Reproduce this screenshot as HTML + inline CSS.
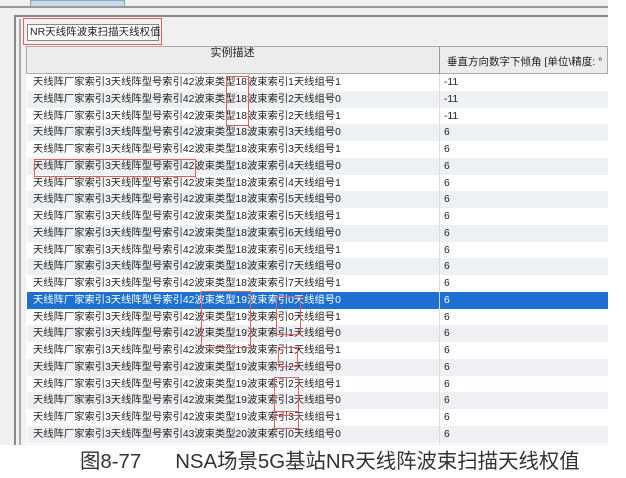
<!DOCTYPE html>
<html><head><meta charset="utf-8"><style>
*{margin:0;padding:0;box-sizing:border-box}
body{width:626px;height:478px;background:#fff;position:relative;overflow:hidden;font-family:"Liberation Sans","Noto Sans CJK SC",sans-serif}
.a{position:absolute}
.row{position:absolute;left:27px;width:581px;height:16.75px;font-size:10.3px;line-height:17.5px;color:#222;white-space:nowrap}
.row span{position:absolute}
.c1{left:6px}.c2{left:417px}
.rb{position:absolute;border:1.5px solid #e06060}
</style></head><body>
<div class="a" style="left:0;top:0;width:608px;height:445px;background:#f0f0f0"></div>
<div class="a" style="left:30px;top:0;width:95px;height:7px;background:#c9d9ee;border:1px solid #8aa"></div>
<div class="a" style="left:0;top:6px;width:608px;height:2px;background:#999"></div>
<div class="a" style="left:14px;top:15px;width:594px;height:2px;background:#888"></div>
<div class="a" style="left:14px;top:15px;width:2px;height:430px;background:#888"></div>
<div class="a" style="left:19px;top:19px;width:2px;height:426px;background:#aaa"></div>
<div class="a" style="left:27px;top:24px;width:132px;height:17px;background:#fff;border:1px solid #888;font-size:10.5px;line-height:15px;padding-left:2px;color:#222;white-space:nowrap">NR天线阵波束扫描天线权值</div>
<div class="rb" style="left:23px;top:18px;width:139px;height:27px"></div>
<div class="a" style="left:26px;top:46px;width:582px;height:28px;background:#ececec;border:1px solid #aaa"></div>
<div class="a" style="left:439px;top:46px;width:1px;height:28px;background:#999"></div>
<div class="a" style="left:26px;top:45px;width:413px;text-align:center;font-size:11px;line-height:16px;color:#222">实例描述</div>
<div class="a" style="left:447px;top:54px;font-size:10.5px;color:#222;white-space:nowrap;width:161px;overflow:hidden">垂直方向数字下倾角 [单位\精度: °</div>
<div class="a" style="left:26px;top:74px;width:582px;height:370px;background:#fff"></div>
<div id="rows"></div>
<script>
var d=[["42","18","1","1","-11"],["42","18","2","0","-11"],["42","18","2","1","-11"],["42","18","3","0","6"],["42","18","3","1","6"],["42","18","4","0","6"],["42","18","4","1","6"],["42","18","5","0","6"],["42","18","5","1","6"],["42","18","6","0","6"],["42","18","6","1","6"],["42","18","7","0","6"],["42","18","7","1","6"],["42","19","0","0","6"],["42","19","0","1","6"],["42","19","1","0","6"],["42","19","1","1","6"],["42","19","2","0","6"],["42","19","2","1","6"],["42","19","3","0","6"],["42","19","3","1","6"],["43","20","0","0","6"]];
var h="";d.forEach(function(r,i){var y=74+i*16.75;var bg=i==13?"#1e6fd2":(i%2?"#eef0f3":"#fff");var col=i==13?"#fff":"#222";
h+='<div class="row" style="top:'+y+'px;background:'+bg+';color:'+col+'"><span class="c1">天线阵厂家索引3天线阵型号索引'+r[0]+'波束类型'+r[1]+'波束索引'+r[2]+'天线组号'+r[3]+'</span><span class="c2">'+r[4]+'</span></div>';});
document.getElementById("rows").innerHTML=h;
</script>
<div class="a" style="left:439px;top:74px;width:1px;height:370px;background:#ddd"></div>
<div class="rb" style="left:226px;top:76px;width:23px;height:50px"></div>
<div class="rb" style="left:34px;top:159px;width:162px;height:18px"></div>
<div class="rb" style="left:201px;top:291px;width:50px;height:57px"></div>
<div class="rb" style="left:276px;top:296px;width:25px;height:39px"></div>
<div class="rb" style="left:278px;top:347px;width:20px;height:20px"></div>
<div class="rb" style="left:274px;top:377px;width:25px;height:35px"></div>
<div class="rb" style="left:274px;top:415px;width:25px;height:14px"></div>
<div class="a" style="left:80px;top:447px;font-size:20.4px;line-height:30px;color:#333;white-space:pre">图8-77      NSA场景5G基站NR天线阵波束扫描天线权值</div>
</body></html>
